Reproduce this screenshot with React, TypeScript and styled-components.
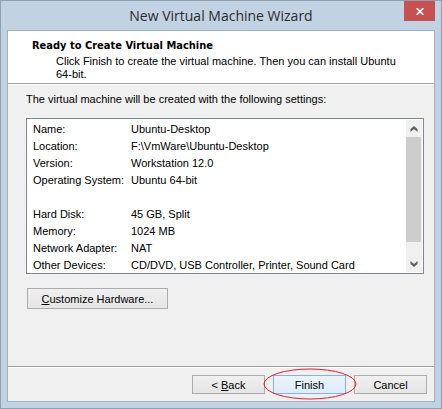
import React from "react";
import styled, { createGlobalStyle, css } from "styled-components";

const GlobalStyle = createGlobalStyle`
  *, *::before, *::after { box-sizing: border-box; }
  body {
    margin: 0;
    color: #000;
    font: 11px/13px "Liberation Sans", Arial, sans-serif;
  }
`;

const Window = styled.main`
  display: flex;
  flex-direction: column;
  min-height: 100vh;
  padding: 0 6px 6px;
  border: 1px solid #8fa0b0;
  background: #c1d3e3;
`;

const TitleBar = styled.header`
  display: flex;
  align-items: flex-start;
  height: 29px;
  padding-left: 31px;
`;

const Title = styled.h1`
  flex: 1;
  margin: 0;
  color: #2b2b2b;
  font: 400 14px/29px "Open Sans", sans-serif;
  text-align: center;
`;

const CloseButton = styled.button`
  display: grid;
  place-items: center;
  width: 31px;
  height: 20px;
  padding: 0;
  border: 0;
  background: #c75050;
`;

const Client = styled.div`
  display: flex;
  flex: 1;
  flex-direction: column;
  border: 1px solid #a1b3c2;
  background: #f0f0f0;
`;

const Heading = styled.section`
  min-height: 54px;
  padding: 8px 24px 0;
  border-bottom: 1px solid #fff;
  background: linear-gradient(#a0a0a0, #a0a0a0) bottom / 100% 1px no-repeat #fff;
`;

const HeadingTitle = styled.h2`
  margin: 0;
  font: 700 11px/14px "DejaVu Sans Condensed", sans-serif;
`;

const HeadingText = styled.p`
  max-width: 376px;
  margin: 2px 0 0;
  padding-left: 24px;
`;

const Content = styled.section`
  flex: 1;
  padding: 8px 10px 12px 18px;
`;

const Intro = styled.p`
  margin: 0 0 12px;
`;

const Details = styled.div`
  display: flex;
  padding: 1px 1px 0;
  border: 1px solid #828790;
  background: #fff;
`;

const Summary = styled.table`
  flex: 1;
  margin-left: 5px;
  border-collapse: collapse;
  line-height: 15px;

  th, td {
    height: 17px;
    padding: 2px 0 0;
    font-weight: 400;
    text-align: left;
    white-space: nowrap;
  }
  th { width: 98px; }
`;

const ScrollBar = styled.div`
  display: flex;
  flex-direction: column;
  width: 16px;
  margin-bottom: 1px;
  background: #f0f0f0;
`;

const ScrollButton = styled.button`
  display: grid;
  place-items: center;
  height: 17px;
  padding: 0;
  border: 0;
  background: #f0f0f0;
`;

const ScrollTrack = styled.div`
  flex: 1;
  padding: 0 1px 13px 0;
`;

const ScrollThumb = styled.div`
  height: 100%;
  background: #cdcdcd;
`;

const Button = styled.button<{ $primary?: boolean; $wide?: boolean }>`
  width: ${(p) => (p.$wide ? 141 : 73)}px;
  height: ${(p) => (p.$wide ? 21 : 19)}px;
  padding: 1px 0 0;
  border: 1px solid #acacac;
  background: linear-gradient(#f0f0f0, #e5e5e5);
  color: #000;
  font: inherit;
  white-space: nowrap;

  ${(p) =>
    p.$primary &&
    css`
      border-color: #7eb4ea;
      background: linear-gradient(#ecf4fc, #dcecfc);
    `}
`;

const Customize = styled.div`
  margin: 14px 0 0 1px;
`;

const Footer = styled.footer`
  display: flex;
  gap: 8px;
  justify-content: flex-end;
  padding: 8px 7px 7px 0;
  border-top: 1px solid #a0a0a0;
  box-shadow: inset 0 1px #fff;
`;

const Marked = styled.span`
  position: relative;
  display: flex;
`;

const Ellipse = styled.svg`
  position: absolute;
  top: -7px;
  left: -10px;
  pointer-events: none;
`;

const settings = [
  ["Name:", "Ubuntu-Desktop"],
  ["Location:", "F:\\VmWare\\Ubuntu-Desktop"],
  ["Version:", "Workstation 12.0"],
  ["Operating System:", "Ubuntu 64-bit"],
  ["", ""],
  ["Hard Disk:", "45 GB, Split"],
  ["Memory:", "1024 MB"],
  ["Network Adapter:", "NAT"],
  ["Other Devices:", "CD/DVD, USB Controller, Printer, Sound Card"],
];

const Chevron = ({ down = false }: { down?: boolean }) => (
  <svg width="8" height="6" viewBox="0 0 8 6" aria-hidden="true">
    <path
      d={down ? "M0.5 0L4 3L7.5 0V3L4 6L0.5 3Z" : "M0.5 6L4 3L7.5 6V3L4 0L0.5 3Z"}
      fill="#606060"
    />
  </svg>
);

export default function App() {
  return (
    <>
      <GlobalStyle />
      <Window>
        <TitleBar>
          <Title>New Virtual Machine Wizard</Title>
          <CloseButton type="button" aria-label="Close">
            <svg width="8" height="7" viewBox="0 0 8 7" aria-hidden="true">
              <path d="M0.7 0.2L7.3 6.8M7.3 0.2L0.7 6.8" stroke="#fff" strokeWidth="1.7" />
            </svg>
          </CloseButton>
        </TitleBar>
        <Client>
          <Heading>
            <HeadingTitle>Ready to Create Virtual Machine</HeadingTitle>
            <HeadingText>
              Click Finish to create the virtual machine. Then you can install Ubuntu 64-bit.
            </HeadingText>
          </Heading>
          <Content>
            <Intro>The virtual machine will be created with the following settings:</Intro>
            <Details>
              <Summary>
                <tbody>
                  {settings.map(([label, value], i) => (
                    <tr key={i}>
                      <th scope="row">{label}</th>
                      <td>{value}</td>
                    </tr>
                  ))}
                </tbody>
              </Summary>
              <ScrollBar>
                <ScrollButton type="button" aria-label="Scroll up">
                  <Chevron />
                </ScrollButton>
                <ScrollTrack>
                  <ScrollThumb />
                </ScrollTrack>
                <ScrollButton type="button" aria-label="Scroll down">
                  <Chevron down />
                </ScrollButton>
              </ScrollBar>
            </Details>
            <Customize>
              <Button type="button" $wide>
                <u>C</u>ustomize Hardware...
              </Button>
            </Customize>
          </Content>
          <Footer>
            <Button type="button">
              &lt; <u>B</u>ack
            </Button>
            <Marked>
              <Button type="button" $primary>
                Finish
              </Button>
              <Ellipse width="94" height="32" viewBox="0 0 94 32" aria-hidden="true">
                <ellipse cx="47" cy="16" rx="46" ry="15" fill="none" stroke="#ed1c24" />
              </Ellipse>
            </Marked>
            <Button type="button">Cancel</Button>
          </Footer>
        </Client>
      </Window>
    </>
  );
}
